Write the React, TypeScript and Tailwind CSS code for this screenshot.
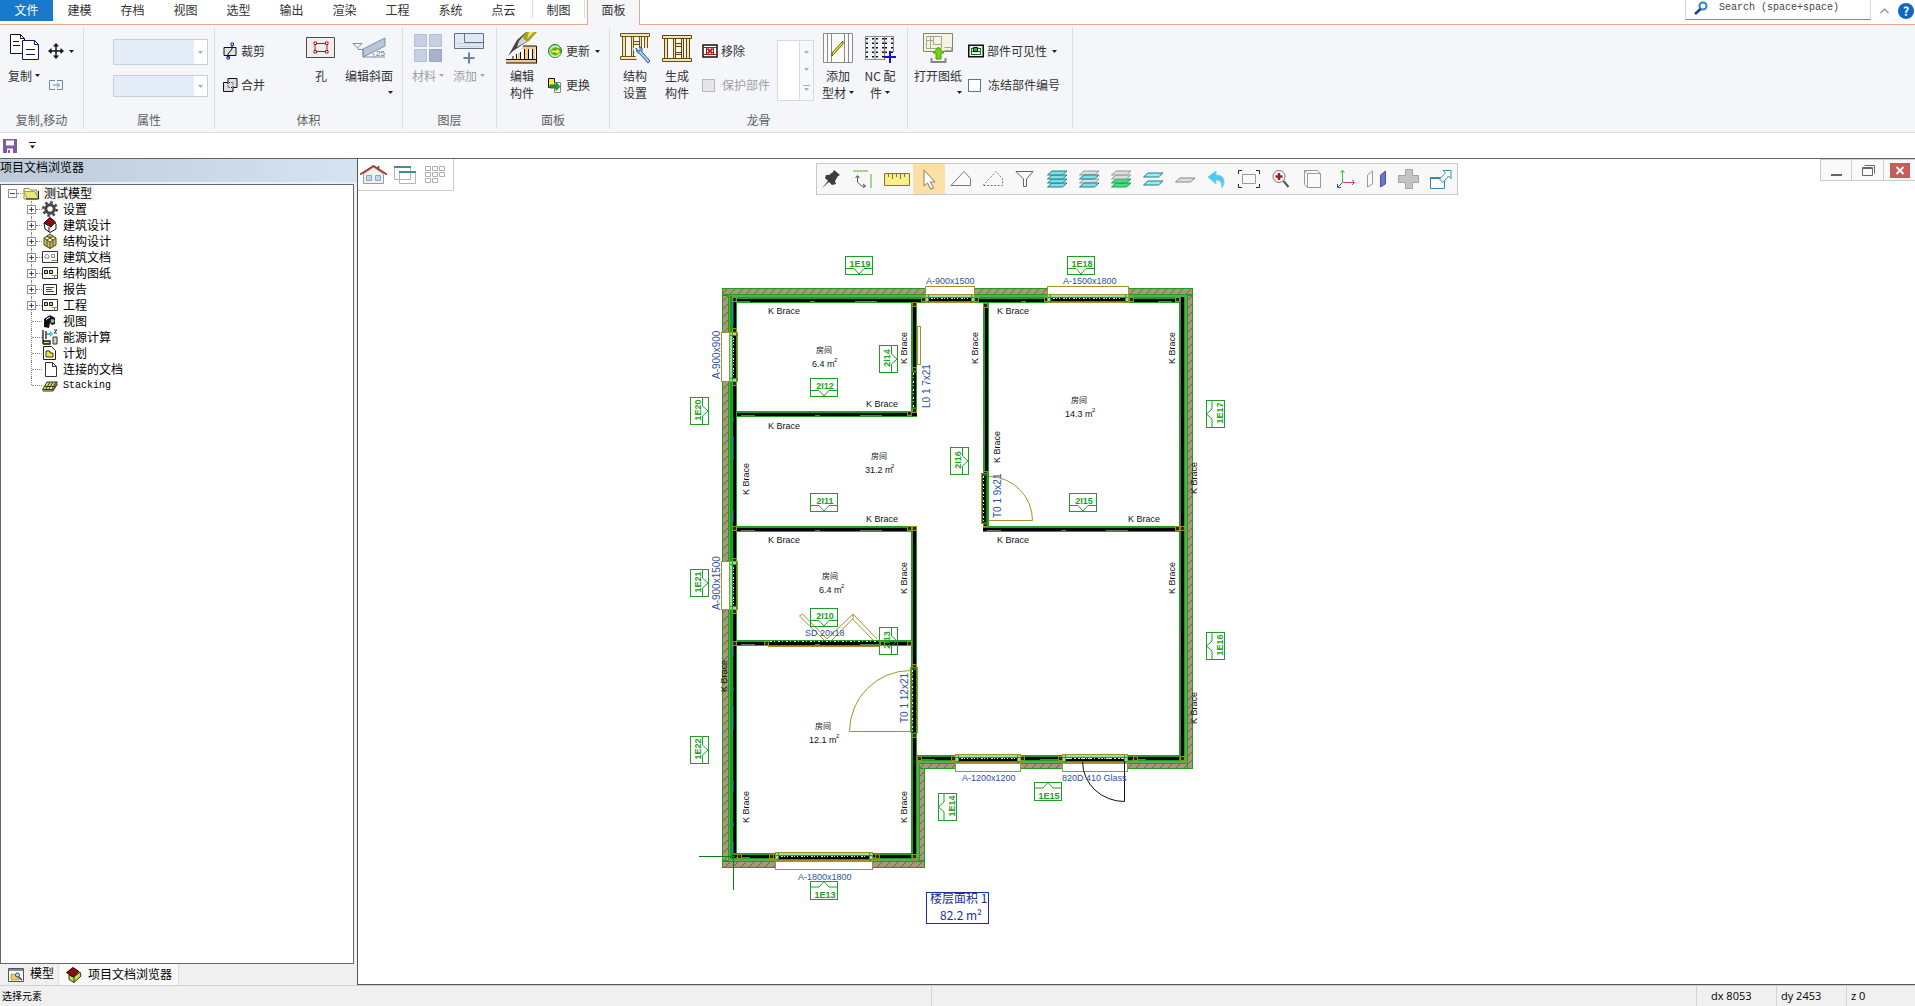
import { ReactNode } from "react";

/* ---------- shared bits ---------- */

function Caret({ dim = false }: { dim?: boolean }) {
  return (
    <svg width="5" height="3" viewBox="0 0 5 3" className="shrink-0" aria-hidden="true">
      <path d="M0 0h5L2.5 3z" fill={dim ? "#a9adb3" : "#222"} />
    </svg>
  );
}

function Group({ title, className, children }: { title: string; className: string; children: ReactNode }) {
  return (
    <section className={`flex h-[102px] shrink-0 flex-col border-r border-[#dcdfe3] ${className}`}>
      <div className="flex h-[84px] items-start">{children}</div>
      <h2 className="text-center leading-[18px] text-[#5c5f66]">{title}</h2>
    </section>
  );
}

function BigButton({ icon, lines, caret, dim, className }: {
  icon: ReactNode; lines: string[]; caret?: "inline" | "below"; dim?: boolean; className: string;
}) {
  return (
    <button type="button" disabled={dim} className={`flex shrink-0 flex-col items-center pt-[5px] ${dim ? "text-[#9ea1a6]" : "text-[#333]"} ${className}`}>
      <span className="mb-[3px] flex h-8 items-center">{icon}</span>
      {lines.map((l, i) => (
        <span key={l} className="flex items-center gap-[3px] whitespace-nowrap leading-[17px]">
          {l}
          {caret === "inline" && i === lines.length - 1 && <Caret dim={dim} />}
        </span>
      ))}
      {caret === "below" && <span className="flex h-[17px] items-center self-end"><Caret /></span>}
    </button>
  );
}

function SmallButton({ icon, label, caret }: { icon: ReactNode; label?: string; caret?: boolean }) {
  return (
    <button type="button" className="flex h-[34px] items-center gap-[3px] whitespace-nowrap text-[#333]">
      {icon}
      {label && <span>{label}</span>}
      {caret && <span className="ml-[2px]"><Caret /></span>}
    </button>
  );
}

function Check({ id, label, disabled }: { id: string; label: string; disabled?: boolean }) {
  return (
    <div className="flex h-[34px] items-center gap-[7px] whitespace-nowrap">
      <input
        id={id}
        type="checkbox"
        disabled={disabled}
        className={`h-[13px] w-[13px] appearance-none border ${disabled ? "border-[#b9b9b9] bg-[#e6e6e6]" : "border-[#5b7499] bg-white"}`}
      />
      <label htmlFor={id} className={disabled ? "text-[#9ea1a6]" : "text-[#333]"}>{label}</label>
    </div>
  );
}

function Combo({ label, className }: { label: string; className: string }) {
  return (
    <div className={`flex w-[95px] border border-[#c6d0da] bg-[#e4edf7] ${className}`}>
      <select aria-label={label} disabled className="w-20 appearance-none bg-[#e4edf7]" />
      <span className="flex flex-1 items-center justify-center bg-white"><Caret dim /></span>
    </div>
  );
}

/* ---------- ribbon icons ---------- */

const CopyIcon = () => (
  <svg width="32" height="32" viewBox="0 0 32 32" fill="#fff">
    <path d="M2.500 2.500h10l4 4V21.500h-14z" stroke="#111" />
    <path d="M12.500 2.500V6.500h4M5 9.500h6M5 13.500h7" stroke="#111" fill="none" />
    <path d="M14.500 8.500h12l4 4V27.500h-16z" stroke="#16166b" />
    <path d="M26.500 8.500V12.500h4M18 17.500h9M18 22.500h9" stroke="#16166b" fill="none" />
  </svg>
);

const MoveIcon = () => (
  <svg width="16" height="16" viewBox="0 0 16 16" fill="#111">
    <path d="M7.300 2h1.400v12H7.300zM2 7.300h12v1.400H2z" />
    <path d="M8 0l3 3.500H5zM8 16l3-3.500H5zM0 8l3.500-3v6zM16 8l-3.500-3v6z" />
  </svg>
);

const MirrorIcon = () => (
  <svg width="16" height="16" viewBox="0 0 16 16" fill="none" stroke="#7484a0">
    <path d="M7 3.500H1.500v9H7M9 3.500h5.500v9H9M5 8h6M9 5.500L11.500 8 9 10.500" />
  </svg>
);

const CutIcon = () => (
  <svg width="16" height="18" viewBox="0 0 16 18" fill="none">
    <path d="M2 5.500h12v8H2z" fill="#e3e3e3" stroke="#111" />
    <path d="M10 3v4L6 12v4" stroke="#111" />
    <path d="M9 1h2.500v2.500H9zM5 14.500h2.500V17H5z" stroke="#1a1acc" />
  </svg>
);

const MergeIcon = () => (
  <svg width="16" height="16" viewBox="0 0 16 16" stroke="#111">
    <path d="M6 1.500h9v9h-4v4H1.500v-9H6z" fill="#ddd" />
    <path d="M6 6v4.500h4.500M11 10V5.500H6.500" fill="none" strokeDasharray="1 1.500" />
  </svg>
);

const HoleIcon = () => (
  <svg width="30" height="32" viewBox="0 0 30 32" fill="none">
    <path d="M.5 5.500h28v20H.5z" fill="#f3eeee" stroke="#4a4a4a" />
    <path d="M9 11.500h12v8H9z" stroke="#444" />
    <path d="M8 10h2.500v2.500H8zM19.500 10H22v2.500h-2.500zM8 18.500h2.500V21H8zM19.500 18.500H22V21h-2.500z" fill="#fff" stroke="#b01818" />
  </svg>
);

const SlopeIcon = () => (
  <svg width="34" height="32" viewBox="0 0 34 32" fill="none" stroke="#7d90a8">
    <path d="M11 17L33 6v8L11 25z" fill="#b9c6d8" />
    <path d="M1 11.500h9L5.500 16zM6 16v1.500h5V25h22M22 25c0-3-1-4-2-5" />
    <text x="24" y="24" fontSize="8" stroke="none" fill="#62758f" fontFamily="Liberation Sans, sans-serif">25</text>
  </svg>
);

const MaterialIcon = () => (
  <svg width="30" height="32" viewBox="0 0 30 32" stroke="#b3bfd4">
    <path d="M1.500 2.500h12v12h-12zM16.500 2.500h12v12h-12zM1.500 17.500h12v12h-12z" fill="#c6d0e2" />
    <path d="M16.500 17.500h12v12h-12z" fill="#a6b3cd" stroke="#97a5c2" />
  </svg>
);

const AddLayerIcon = () => (
  <svg width="32" height="32" viewBox="0 0 32 32" fill="none">
    <path d="M1.500 1.500h29v15h-29z" fill="#dfe8f4" stroke="#5f7290" />
    <path d="M11.500 2v8.500H30" fill="none" stroke="#5f7290" />
    <path d="M4 11.500h24M6 14.500h20" stroke="#c4d2e4" />
    <path d="M16 20.500v11M10.500 26h11" stroke="#6b82a2" strokeWidth="2" />
  </svg>
);

const EditPartIcon = () => (
  <svg width="32" height="32" viewBox="0 0 32 32">
    <path d="M0 28h30v3H0zM17 14h13v3H15zM19 17h3v11h-3zM26 17h3v11h-3zM12 21h3v7h-3z" fill="#f5c98c" />
    <path d="M0 27.500h30M0 31h31M17 14h13.500v17M14.500 20v8M18.500 17v10M22.500 17v10M26.500 17v10M7 24v3M10.500 22v5" stroke="#111" fill="none" />
    <path d="M2 24L11 8 20 0l10 0-8 9L7 19z" fill="#444" />
    <path d="M13 9l6-7 7 1-6 7-9 5z" fill="#d6d6d6" />
    <path d="M20 0h11l-8 9c-3 1-6-2-6-4z" fill="#a8a01c" />
    <path d="M23 0h5l-7 7z" fill="#e8e66c" />
  </svg>
);

const UpdateIcon = () => (
  <svg width="16" height="16" viewBox="0 0 16 16">
    <circle cx="8" cy="8" r="6.500" fill="#52b84e" stroke="#1f7a20" />
    <path d="M12 5a5 5 0 1 0 1 5" fill="none" stroke="#baf0a8" strokeWidth="2" />
    <path d="M4 7h5V5l5 3.500L9 12v-2H4z" fill="#f1ee1f" stroke="#3c7a14" strokeWidth=".6" />
  </svg>
);

const SwapIcon = () => (
  <svg width="16" height="16" viewBox="0 0 16 16">
    <path d="M1.500 1.500h6v9h-6z" fill="#f4ef3c" stroke="#111" />
    <path d="M7.500 5.500h6v10h-6z" fill="#fff" stroke="#888" />
    <path d="M3 8h6V5.500L13 9.500 9 13.500V11H3z" fill="#24a32b" stroke="#063" strokeWidth=".8" />
  </svg>
);

const frame = "M1.500 3.500h29v3h-29zM1.500 26.500h29v3h-29zM3.500 6.500h3v20h-3zM25.500 6.500h3v20h-3zM12.500 6.500h2v20h-2zM20.500 6.500h2v20h-2zM14.500 11.500h6v3h-6zM14.500 20.500h6v2h-6z";

const StructureIcon = () => (
  <svg width="32" height="32" viewBox="0 0 32 32">
    <path d={frame} transform="translate(0 -2)" fill="#f6e3ae" stroke="#6d5516" />
    <path d="M14 16h18v16H19z" fill="#f4f6f9" />
    <path d="M17 16l1 4 3 2 8 9 2-2-8-9V16l-2-1v4h-2z" fill="#a9cdf2" stroke="#2b5c96" />
  </svg>
);

const GenerateIcon = () => (
  <svg width="32" height="32" viewBox="0 0 32 32"><path d={frame} fill="#f6e3ae" stroke="#5d4810" /></svg>
);

const RemoveIcon = () => (
  <svg width="16" height="14" viewBox="0 0 16 14">
    <path d="M1 1h14v12H1z" fill="#fff" stroke="#111" strokeWidth="1.500" />
    <path d="M1 3.500h14M1 10.500h14M4.500 3v8M11.500 3v8" stroke="#8f2020" />
    <path d="M5.500 4.500l5 5M10.500 4.500l-5 5" stroke="#d01616" strokeWidth="1.800" />
  </svg>
);

const ProfileIcon = () => (
  <svg width="30" height="32" viewBox="0 0 30 32" fill="none" stroke="#8b8b8b">
    <path d="M.5 1.500h29v29H.5zM4.500 2v28M8.500 2v28M21.500 2v28M25.500 2v28" fill="#fafafa" />
    <path d="M9 21L20 9v3L9 24z" fill="#f3ef2a" stroke="#5a5600" />
  </svg>
);

const NcIcon = () => (
  <svg width="32" height="32" viewBox="0 0 32 32" fill="none">
    <path d="M1 4.500h29M1 27.500h20M1.500 4v24M29.500 4v16" stroke="#8b8b8b" />
    <path d="M3 6v21M9 6v21M13 6v21M19 6v21M22 6v18M28 6v15" stroke="#111" strokeWidth="2" strokeDasharray="1.500 3" />
    <path d="M11 5v22M20.500 5v22" stroke="#777" />
    <path d="M26 19v12M20 25h12" stroke="#1313d0" strokeWidth="2" />
  </svg>
);

const OpenDrawingIcon = () => (
  <svg width="32" height="32" viewBox="0 0 32 32" fill="none">
    <path d="M1.500 1.500h29v18h-29z" fill="#f5f4e2" stroke="#85856e" />
    <path d="M4.500 4.500h15v12h-15zM4.500 8.500h7M8.500 4.500v12M11.500 4.500v8h8M22.500 15.500h7v3h-7" stroke="#a6a690" />
    <path d="M16.500 15l5.500 6h-3v6h-5v-6h-3z" fill="#6fd30f" stroke="#4b9a08" />
    <path d="M9.500 26v4h14v-4" stroke="#888" strokeWidth="2" />
  </svg>
);

const VisibleIcon = () => (
  <svg width="16" height="14" viewBox="0 0 16 14">
    <path d="M.75 1.250h14.500v11.500H.75z" fill="#e4f7e0" stroke="#111" strokeWidth="1.500" />
    <path d="M3 4.500h10M3 7.500h10M3 10.500h10M3.500 4v7M12.500 4v7" stroke="#1d6f28" />
    <path d="M5.500 3.500h4v4h-4z" stroke="#111" fill="#3da64a" />
  </svg>
);

/* ---------- top of window ---------- */

const tabs = ["建模", "存档", "视图", "选型", "输出", "渲染", "工程", "系统", "点云"];

function TabBar() {
  return (
    <nav className="flex h-[25px] shrink-0 bg-white text-[#333]">
      <div className="border-b border-[#e9a885]">
        <button type="button" className="h-[21px] w-[53px] bg-[#1979ca] pb-[2px] leading-[19px] text-white">文件</button>
      </div>
      {tabs.map((t) => (
        <button key={t} type="button" className="w-[53px] border-b border-[#e9a885] pb-1">{t}</button>
      ))}
      <div className="flex w-[57px] border-b border-[#e9a885] pl-[2px]">
        <button type="button" className="mb-[6px] w-[53px] border-x border-[#dcdcdc] pt-px">制图</button>
      </div>
      <button type="button" className="w-[53px] border-x border-[#e9a885] bg-[#f4f6f9] pb-[5px]">面板</button>
      <div className="flex flex-1 items-start justify-end border-b border-[#e9a885]">
        <label className="flex h-[20px] w-[186px] items-center border-x border-b border-[#d8d8d8] border-b-[#888] pl-2">
          <svg width="14" height="14" viewBox="0 0 14 14" fill="none" className="mb-[3px]">
            <circle cx="9" cy="5" r="3.500" stroke="#2f7fc4" strokeWidth="2" />
            <path d="M6.500 8L1 13" stroke="#1c3f94" strokeWidth="2.500" />
          </svg>
          <input
            aria-label="Search"
            placeholder="Search (space+space)"
            className="mb-1 ml-[11px] w-36 bg-transparent font-['Liberation_Mono',monospace] text-[10px] leading-3 placeholder:text-[#444] placeholder:opacity-100"
          />
        </label>
        <svg width="9" height="20" viewBox="0 0 9 20" className="ml-[9px]"><path d="M.5 13l4-4 4 4" fill="none" stroke="#999" strokeWidth="1.500" /></svg>
        <button type="button" aria-label="Help" className="ml-[9px] mt-[3px] mr-px h-4 w-4 rounded-full bg-[#1168c4] text-center text-[12px] font-bold leading-4 text-white">?</button>
      </div>
    </nav>
  );
}

function Ribbon() {
  return (
    <div className="flex h-[108px] shrink-0 overflow-hidden border-b border-[#d9dbde] bg-[#f4f6f9] pt-[2px]">
      <Group title="复制,移动" className="w-[84px]">
        <BigButton icon={<CopyIcon />} lines={["复制"]} caret="inline" className="ml-[7px] w-[34px]" />
        <div className="ml-[7px] pt-[7px]">
          <SmallButton icon={<MoveIcon />} caret />
          <SmallButton icon={<MirrorIcon />} />
        </div>
      </Group>
      <Group title="属性" className="w-[131px]">
        <div className="flex flex-col gap-[10px] pl-[29px] pt-3">
          <Combo label="属性一" className="h-[26px]" />
          <Combo label="属性二" className="h-[22px]" />
        </div>
      </Group>
      <Group title="体积" className="w-[188px]">
        <div className="ml-[7px] w-[81px] pt-[7px]">
          <SmallButton icon={<CutIcon />} label="裁剪" />
          <SmallButton icon={<MergeIcon />} label="合并" />
        </div>
        <BigButton icon={<HoleIcon />} lines={["孔"]} className="w-9" />
        <BigButton icon={<SlopeIcon />} lines={["编辑斜面"]} caret="below" className="ml-[6px] w-[48px]" />
      </Group>
      <Group title="图层" className="w-[94px]">
        <BigButton icon={<MaterialIcon />} lines={["材料"]} caret="inline" dim className="ml-[7px] w-[36px]" />
        <BigButton icon={<AddLayerIcon />} lines={["添加"]} caret="inline" dim className="ml-[5px] w-[36px]" />
      </Group>
      <Group title="面板" className="w-[113px]">
        <BigButton icon={<EditPartIcon />} lines={["编辑", "构件"]} className="ml-2 w-[34px]" />
        <div className="ml-2 pt-[7px]">
          <SmallButton icon={<UpdateIcon />} label="更新" caret />
          <SmallButton icon={<SwapIcon />} label="更换" />
        </div>
      </Group>
      <Group title="龙骨" className="w-[298px]">
        <BigButton icon={<StructureIcon />} lines={["结构", "设置"]} className="ml-[9px] w-8" />
        <BigButton icon={<GenerateIcon />} lines={["生成", "构件"]} className="ml-[10px] w-8" />
        <div className="ml-[9px] w-[68px] pt-[7px]">
          <SmallButton icon={<RemoveIcon />} label="移除" />
          <Check id="protect" label="保护部件" disabled />
        </div>
        <div className="ml-[7px] mt-[13px] flex h-[61px] w-[37px] border border-[#d7dade] bg-white">
          <div className="ml-auto flex w-[14px] flex-col items-center justify-between border-l border-[#d7dade] bg-[#f7f8fa] py-[9px]">
            <svg width="5" height="3" viewBox="0 0 5 3"><path d="M0 3h5L2.500 0z" fill="#a9adb3" /></svg>
            <Caret dim />
            <svg width="7" height="6" viewBox="0 0 7 6"><path d="M0 0h7v1H0zM1 3h5L3.500 6z" fill="#a9adb3" /></svg>
          </div>
        </div>
        <BigButton icon={<ProfileIcon />} lines={["添加", "型材"]} caret="inline" className="ml-[6px] w-[36px]" />
        <BigButton icon={<NcIcon />} lines={["NC 配", "件"]} caret="inline" className="ml-[6px] w-[36px]" />
      </Group>
      <Group title="" className="w-[165px]">
        <BigButton icon={<OpenDrawingIcon />} lines={["打开图纸"]} caret="below" className="ml-[6px] w-[48px]" />
        <div className="ml-[6px] pt-[7px]">
          <SmallButton icon={<VisibleIcon />} label="部件可见性" caret />
          <Check id="freeze" label="冻结部件编号" />
        </div>
      </Group>
    </div>
  );
}

function QuickAccess() {
  return (
    <div className="flex h-[26px] shrink-0 items-center gap-3 border-b border-[#666] bg-white pl-[3px]">
      <button type="button" aria-label="保存">
        <svg width="14" height="14" viewBox="0 0 14 14">
          <path d="M0 0h14v14H0z" fill="#8557a5" />
          <path d="M3 1.500h8v5H3zM4 9.500h6V14H4z" fill="#fff" />
          <path d="M5 11h2v3H5z" fill="#8557a5" />
        </svg>
      </button>
      <button type="button" aria-label="自定义">
        <svg width="7" height="7" viewBox="0 0 7 7"><path d="M0 0h7v1H0zM1 3.500h5L3.500 6.500z" fill="#111" /></svg>
      </button>
    </div>
  );
}

/* ---------- project tree ---------- */

const treeIcons: Record<string, ReactNode> = {
  folder: (
    <>
      <path d="M1 3.500h5l1.500 1.500H14v9H1z" fill="#fffbd0" stroke="#8a8a50" />
      <path d="M1 6.500h11l3 7H4z" fill="#ece77a" stroke="#a8a444" />
      <path d="M3 14h12.500V6" fill="none" stroke="#222" />
    </>
  ),
  gear: (
    <>
      <circle cx="8" cy="8" r="4.200" fill="none" stroke="#444" strokeWidth="3" />
      <circle cx="8" cy="8" r="6.700" fill="none" stroke="#444" strokeWidth="2.500" strokeDasharray="2.600 2.660" />
    </>
  ),
  arch: (
    <>
      <path d="M2 6L8 1l6 6v5l-6 3.500L3 12z" fill="#fff" stroke="#111" />
      <path d="M2 6L8 .5 13.500 5 9 10z" fill="#8b0d0d" stroke="#300" />
      <path d="M7 10v5" stroke="#111" />
    </>
  ),
  struct: (
    <path d="M2 5l6-4 6 4v7l-6 3.500L2 12zM2 5l6 4 6-4M8 9v6.500M5 7v6.500M11 7v6.500M5 3l6 4M11 3L5 7" fill="#c9c463" stroke="#4a4a14" />
  ),
  archDoc: (
    <>
      <path d="M.5 2.500h15v11H.5z" fill="#fff" stroke="#333" />
      <path d="M3 7l2-2 2 2v2H3zM9.500 5.500h3v3h-3zM9.500 11.500H15" fill="none" stroke="#888" />
    </>
  ),
  sheet: (
    <>
      <path d="M.5 2.500h15v11H.5z" fill="#fff" stroke="#333" />
      <path d="M2.500 5.500h3v3h-3zM7.500 5.500h3v3h-3z" fill="#e6e05a" stroke="#111" />
      <path d="M9.500 10.500h6M12.500 10.500v3" stroke="#888" />
    </>
  ),
  report: (
    <>
      <path d="M1.500 3.500h13v10h-13z" fill="#fff" stroke="#222" />
      <path d="M4 6.500h8M4 8.500h6M4 10.500h8" stroke="#444" />
    </>
  ),
  camera: (
    <>
      <path d="M2 6l6-4 5 3v6l-3 1-2-2-1 5-5-1z" fill="#111" />
      <circle cx="10.500" cy="8" r="2" fill="#9aa" />
      <path d="M4 6.500l4-2.500" stroke="#fff" />
    </>
  ),
  energy: (
    <>
      <path d="M1 1v14M4 2v8M1 12h7v3H1" fill="#ece63c" stroke="#111" strokeWidth="1.300" />
      <path d="M5 4h3V2l3 3-3 3V6H5z" fill="#3fc4d0" />
      <path d="M11 8h4v7h-4z" fill="#bfe0bf" stroke="#333" />
      <path d="M12 1h3l-3 3h3" fill="none" stroke="#333" />
    </>
  ),
  plan: (
    <>
      <path d="M1.500 1.500h8l4 4v9h-12z" fill="#fff" stroke="#222" />
      <path d="M4 6h4v2h3v4H4z" fill="#f2ec2a" stroke="#333" />
    </>
  ),
  file: <path d="M3.500 1.500h7l4 4v10h-11zM10.500 1.500v4h4" fill="#fff" stroke="#333" />,
  stack: <path d="M.5 12.500L5 5h10.500L11 12.500zM3 9.500h10M7 12l4-7M4 12l4-7M10 12l4-7M.5 14h10.500L15.500 7" fill="#d9d277" stroke="#3b3b10" />,
};

function TreeIcon({ name }: { name: string }) {
  return <svg width="16" height="16" viewBox="0 0 16 16" className="shrink-0">{treeIcons[name]}</svg>;
}

function Expander({ open }: { open?: boolean }) {
  return (
    <button type="button" aria-label={open ? "折叠" : "展开"} className="shrink-0">
      <svg width="9" height="9" viewBox="0 0 9 9" shapeRendering="crispEdges">
        <path d="M.5.500h8v8h-8z" fill="#fff" stroke="#919191" />
        <path d={open ? "M2 4h5v1H2z" : "M2 4h5v1H2zM4 2h1v5H4z"} fill="#2b4a8c" />
      </svg>
    </button>
  );
}

const tree: [string, string, boolean][] = [
  ["设置", "gear", true],
  ["建筑设计", "arch", true],
  ["结构设计", "struct", true],
  ["建筑文档", "archDoc", true],
  ["结构图纸", "sheet", true],
  ["报告", "report", true],
  ["工程", "sheet", true],
  ["视图", "camera", false],
  ["能源计算", "energy", false],
  ["计划", "plan", false],
  ["连接的文档", "file", false],
  ["Stacking", "stack", false],
];

function Sidebar() {
  return (
    <aside className="flex w-[357px] shrink-0 flex-col bg-[#f0f0f0] text-black">
      <h1 className="h-[23px] bg-linear-to-r from-[#bccad9] to-[#d6e4f2] leading-[15px]">项目文档浏览器</h1>
      <div className="mr-[3px] mt-[2px] flex-1 overflow-hidden border border-[#666] bg-white">
        <div className="flex h-4 items-center pl-[7px]">
          <Expander open />
          <span className="w-[6px] border-t border-dotted border-[#888]" />
          <TreeIcon name="folder" />
          <span className="ml-[3px] bg-[#f2f2f2] px-[2px] leading-4">测试模型</span>
        </div>
        <ul>
          {tree.map(([label, icon, expandable], i) => (
            <li key={label} className="flex h-4 items-center pl-[26px]">
              {expandable ? (
                <span className="flex h-4 flex-col items-center">
                  <span className="h-1 border-l border-dotted border-[#888]" />
                  <Expander />
                  <span className="h-[3px] border-l border-dotted border-[#888]" />
                </span>
              ) : (
                <span className={`ml-1 w-[5px] self-start border-l border-dotted border-[#888] ${i === tree.length - 1 ? "h-2" : "h-4"}`} />
              )}
              <span className={`border-t border-dotted border-[#888] ${expandable ? "w-[6px]" : "-ml-1 w-[10px]"}`} />
              <TreeIcon name={icon} />
              <span className={`ml-[5px] ${label === "Stacking" ? "font-['Liberation_Mono',monospace] text-[10px] leading-3 pt-[2px]" : "leading-4"}`}>{label}</span>
            </li>
          ))}
        </ul>
      </div>
      <div className="flex h-[21px] pl-[2px]">
        <button type="button" className="flex w-[57px] items-center gap-[6px] border-r border-[#e2e2e2] pl-[6px]">
          <svg width="16" height="14" viewBox="0 0 16 14">
            <path d="M.5.500h15v13H.5z" fill="#fff" stroke="#555" />
            <path d="M1 1h14v2H1z" fill="#7a8ca8" />
            <path d="M3 6h4l1 1h3v5H3z" fill="#f0c860" stroke="#a07820" strokeWidth=".6" />
            <circle cx="9.500" cy="7" r="2" fill="#cfe4ff" stroke="#345" />
            <path d="M11 9l3 3" stroke="#345" strokeWidth="1.500" />
          </svg>
          <span className="pb-[4px]">模型</span>
        </button>
        <button type="button" className="flex w-[120px] items-center gap-[6px] border-r border-[#ddd] bg-[#f9f9f9] pl-[7px]">
          <svg width="16" height="16" viewBox="0 0 16 16">
            <path d="M3 8l5 2 6-5 1 4-7 6.500-5-3z" fill="#bfe33a" stroke="#232" />
            <path d="M.5 5.500L7 .5l6 4L7 10z" fill="#8b0d0d" stroke="#300" />
            <path d="M8 10v5" stroke="#232" />
          </svg>
          <span className="pb-[2px]">项目文档浏览器</span>
        </button>
      </div>
    </aside>
  );
}

/* ---------- view toolbars ---------- */

const sheetPath = (y: number) => `M.500 ${y + 4}L5 ${y}h15l-4.500 ${4}z`;

const tools: [string, ReactNode][] = [
  ["固定", <path d="M11 1l6 5-2 1-3 5 1 3-4 1-3-3-7 6 6-7-3-3 1-3 3 0 4-3z" fill="#3d3d3d" />],
  ["旋转", <><path d="M-2 1h15v2H-2zM15 5h2v14h-2z" fill="#a6d68c" /><path d="M2.500 7v6l4 4h4M.5 9l2-2.500 2 2.500M8 15l2.500 2-2.500 2" stroke="#555" fill="none" /></>],
  ["测量", <><path d="M-2.500 4.500h25v12h-25z" fill="#f7f08a" stroke="#8f7420" /><path d="M1.500 5v3M5.500 5v5M9.500 5v3M13.500 5v5M17.500 5v3" stroke="#8f7420" /></>],
  ["选择", <path d="M5 1v16l3.500-3 3 6 3-1-3-6h4.500z" fill="#fff" stroke="#8a7a66" />],
  ["多边形", <path d="M0 16.500L13 2.500l6.500 7v7z" fill="#fafafa" stroke="#777" />],
  ["虚线多边形", <path d="M0 16.500L13 2.500l6.500 7v7z" fill="none" stroke="#777" strokeDasharray="2 1.500" />],
  ["过滤", <path d="M1 2.500h17L11.500 10v7.500h-3V10z" fill="#fff" stroke="#666" />],
  ["全部层", <g stroke="#1f7f8a" fill="#7fdfe8"><path d={sheetPath(14)} /><path d={sheetPath(10)} /><path d={sheetPath(6)} /><path d={sheetPath(2)} /></g>],
  ["部分层", <><g stroke="#999" fill="#ddd"><path d={sheetPath(10)} /><path d={sheetPath(2)} /></g><g stroke="#1f7f8a" fill="#7fdfe8"><path d={sheetPath(14)} /><path d={sheetPath(6)} /></g></>],
  ["当前层", <><g stroke="#1fa04a" fill="#3fe07a"><path d={sheetPath(14)} /><path d={sheetPath(10)} /></g><g stroke="#999" fill="#ddd"><path d={sheetPath(6)} /><path d={sheetPath(2)} /></g></>],
  ["双层", <g stroke="#1f7f8a" fill="#9fe8ee"><path d={sheetPath(12)} /><path d={sheetPath(4)} /></g>],
  ["单层", <path d={sheetPath(9)} fill="#ddd" stroke="#888" />],
  ["撤销", <path d="M1 8l8-6v4c8 0 10 6 6 13 0-6-2-8-6-8v4z" fill="#45cdee" stroke="#8cc9e6" />],
  ["适合窗口", <><path d="M3.500 5.500h13v9h-13z" fill="#fafafa" stroke="#999" /><path d="M-.5 5V1.500H3M17 1.500h3.500V5M-.5 15v3.500H3M17 18.500h3.500V15" fill="none" stroke="#222" /></>],
  ["放大", <><circle cx="8" cy="7.500" r="6" fill="#fdf4f4" stroke="#777" /><path d="M8 4v7M4.500 7.500h7" stroke="#a01c1c" strokeWidth="2.500" /><path d="M12.500 12l5 6" stroke="#555" strokeWidth="2" /></>],
  ["三维", <path d="M1.500 1.500h13l3 3v14h-13l-3-3zM4.500 18V4.500h13M1.500 1.500l3 3" fill="#fafafa" stroke="#999" />],
  ["坐标轴", <g fill="none"><path d="M7.500 13V2M5.500 4l2-3 2 3" stroke="#3ecb4c" /><path d="M7.500 13.500h12M17 11l2.500 2.500L17 16" stroke="#d8415a" /><path d="M7.500 13.500l-5 5M2.500 15v3.500H6" stroke="#3c50b4" /></g>],
  ["剖面", <><path d="M.5 6l5-4v13l-5 3z" fill="#fafafa" stroke="#999" /><path d="M13.500 6l5-4v13l-5 3z" fill="#6a74d6" stroke="#4a53a8" /></>],
  ["添加", <path d="M6.500.500h7v6h6v7h-6v6h-7v-6h-7v-7h7z" fill="#c4c4c4" stroke="#a4a4a4" />],
  ["外部窗口", <><path d="M-.5 8.500h14v11h-14z" fill="#fff" stroke="#3b85ab" /><path d="M-.5 8h14v2h-14z" fill="#3b85ab" /><path d="M12 1.500h8v8l-2.500-2.500L12 13.500l-3.500-3.500L14.500 4z" fill="#fff" stroke="#3b85ab" /></>],
];

function ViewToolbar() {
  return (
    <div className="absolute inset-x-0 top-1 flex justify-center">
      <div className="flex h-8 border border-[#c8c8c8] bg-[#f8f8f8]">
        {tools.map(([label, icon]) => (
          <button key={label} type="button" aria-label={label} className={`flex w-8 items-center justify-center ${label === "选择" ? "bg-[#fde0a6]" : ""}`}>
            <svg width="20" height="20" viewBox="0 0 20 20" className="overflow-visible">{icon}</svg>
          </button>
        ))}
      </div>
    </div>
  );
}

function ViewCorner() {
  return (
    <div className="absolute left-0 top-0 flex h-8 w-24 items-center gap-[7px] border-b border-r border-[#ccc] bg-white pl-[2px]">
      <svg width="27" height="20" viewBox="0 0 27 20">
        <path d="M3.500 9v9.500h20V9L13.500 2z" fill="#f5f2ea" stroke="#9a9a9a" />
        <path d="M0 9.500L13.500 1 27 9.500M18.500 1v3" fill="none" stroke="#a0382a" strokeWidth="1.800" />
        <path d="M6.500 10.500h5v5h-5zM15.500 10.500h5v5h-5z" fill="#bcd7f2" stroke="#8aa4c4" />
      </svg>
      <svg width="22" height="20" viewBox="0 0 22 20" fill="#fff" stroke="#b5b5b5">
        <path d="M.5 1.500h16v13H.5zM5.500 6.500h16v12h-16z" />
        <path d="M0 2h17M5 7h17" stroke="#3f8f93" strokeWidth="2" />
      </svg>
      <svg width="22" height="20" viewBox="0 0 22 20" fill="#fff" stroke="#b0b0b0" className="ml-[2px]">
        <path d="M.5 1.500h5v4h-5zM7.500 1.500h5v4h-5zM14.500 1.500h5v4h-5zM.5 7.500h5v4h-5zM7.500 7.500h5v4h-5zM14.500 7.500h5v4h-5zM.5 13.500h5v4h-5zM7.500 13.500h5v4h-5z" />
      </svg>
    </div>
  );
}

function WindowButtons() {
  return (
    <div className="absolute right-0 top-0 flex h-[22px] border border-r-0 border-[#ccc] bg-[#fafafa]">
      <button type="button" aria-label="最小化" className="w-[31px] border-r border-[#ccc]">
        <svg width="31" height="19" viewBox="0 0 31 19"><path d="M10 13h11v2H10z" fill="#666" /></svg>
      </button>
      <button type="button" aria-label="还原" className="w-[32px] border-r border-[#ccc]">
        <svg width="31" height="19" viewBox="0 0 31 19" fill="none" stroke="#666"><path d="M10.500 6.500h10v8h-10zM10 7.500h11M12.500 4.500h10v8" /></svg>
      </button>
      <button type="button" aria-label="关闭" className="flex w-[31px] items-center justify-center">
        <svg width="20" height="15" viewBox="0 0 20 15"><path d="M0 0h20v15H0z" fill="#c75c5c" /><path d="M6.500 4l7 7M13.500 4l-7 7" stroke="#fff" strokeWidth="1.800" /></svg>
      </button>
    </div>
  );
}

/* ---------- floor plan ---------- */

const GREEN = "#1f9e24";
const OLIVE = "#a8912c";
const BLUE = "#2c539c";

type Box = [number, number, number, number]; // x, y, w, h

const hatched: Box[] = [
  [722, 288, 471, 7],
  [722, 295, 7, 566],
  [722, 861, 203, 7],
  [919, 763, 6, 98],
  [919, 763, 274, 6],
  [1187, 295, 6, 474],
];

const insulation: Box[] = [
  [729, 295, 458, 2],
  [729, 295, 3, 566],
  [729, 859, 190, 2],
  [917, 761, 2, 100],
  [917, 761, 270, 2],
  [1184, 297, 3, 466],
];

// stud walls, all 6 px thick
const studs: Box[] = [
  [732, 297, 453, 6],
  [731, 297, 6, 562],
  [732, 853, 185, 6],
  [911, 303, 6, 113],
  [737, 411, 180, 6],
  [737, 526, 180, 6],
  [911, 526, 6, 333],
  [737, 640, 175, 6],
  [983, 303, 6, 229],
  [983, 526, 199, 6],
  [917, 755, 266, 6],
  [1179, 297, 6, 464],
];

const nodes: [number, number][] = [
  [734, 299], [923, 299], [976, 299], [1046, 299], [1131, 299], [1177, 299],
  [914, 304], [985, 305], [734, 330], [734, 383], [914, 369], [914, 410],
  [909, 413], [734, 528], [909, 528], [914, 528], [734, 560], [734, 611],
  [985, 473], [985, 524], [1177, 528], [1182, 528], [734, 643], [766, 643],
  [882, 643], [909, 643], [914, 666], [914, 735], [919, 758], [953, 758],
  [1022, 758], [1060, 758], [1135, 758], [1182, 758], [739, 856], [771, 856],
  [877, 856], [914, 856],
];

// [x, y, length, side the sill is on]
const windows: [number, number, number, "top" | "left" | "bottom"][] = [
  [925, 286, 50, "top"],
  [1047, 286, 82, "top"],
  [721, 332, 50, "left"],
  [721, 561, 49, "left"],
  [775, 851, 98, "bottom"],
  [955, 753, 66, "bottom"],
  [1062, 753, 66, "bottom"],
];

const braces: [number, number][] = [
  [768, 314], [997, 314], [866, 407], [768, 429], [866, 522], [1128, 522], [768, 543], [997, 543],
];

const bracesUp: [number, number][] = [
  [907, 364], [978, 364], [1175, 364], [1000, 463], [1197, 494], [749, 495],
  [907, 594], [1175, 594], [727, 692], [1197, 724], [749, 823], [907, 823],
];

const sizes: [string, number, number][] = [
  ["A-900x1500", 926, 284], ["A-1500x1800", 1063, 284], ["SD 20x18", 805, 636],
  ["A-1800x1800", 798, 880], ["A-1200x1200", 962, 781], ["820D 410 Glass", 1062, 781],
];

const sizesUp: [string, number, number][] = [
  ["A-900x900", 720, 379], ["A-900x1500", 720, 610], ["L0 1 7x21", 930, 408],
  ["T0 1 9x21", 1001, 518], ["T0 1 12x21", 908, 723],
];

const tags: [string, number, number, "down" | "up" | "right" | "left"][] = [
  ["1E19", 845, 256, "down"], ["1E18", 1067, 256, "down"], ["2I12", 810, 378, "down"],
  ["2I11", 810, 493, "down"], ["2I15", 1069, 493, "down"], ["2I10", 810, 608, "down"],
  ["1E13", 810, 881, "up"], ["1E15", 1034, 782, "up"],
  ["1E20", 690, 397, "right"], ["1E21", 690, 569, "right"], ["1E22", 690, 736, "right"],
  ["2I14", 879, 345, "right"], ["2I16", 950, 447, "right"], ["2I13", 879, 627, "right"],
  ["1E17", 1206, 400, "left"], ["1E16", 1206, 632, "left"], ["1E14", 938, 793, "left"],
];

// [area, x, baseline, x of the name, x of the exponent]
const rooms: [string, number, number, number, number][] = [
  ["6.4 m", 812, 367, 816, 834],
  ["31.2 m", 865, 473, 871, 891],
  ["14.3 m", 1065, 417, 1071, 1092],
  ["6.4 m", 819, 593, 822, 841],
  ["12.1 m", 809, 743, 815, 836],
];

function Stud({ box: [x, y, w, h] }: { box: Box }) {
  const across = w > h;
  const outer = across ? "M0 3" : "M3 0";
  const run = across ? `h${w}` : `v${h}`;
  const blue = x === 731 && !across;
  return (
    <g transform={`translate(${x} ${y})`} fill="none">
      <path d={outer + run} stroke={GREEN} strokeWidth="6" />
      <path d={across ? `M0 3.500h${w}` : `M3.500 0v${h}`} stroke="#000" strokeWidth="3" />
      <path d={across ? `M4 4.500h${w - 8}` : `M1.500 4v${h - 8}`} stroke="#5e7a60" strokeDasharray="14 60 5 40 22 70" />
      {blue && <path d={`M2.500 4v${h - 8}`} stroke="#1c2ec0" strokeDasharray="24 50 12 30 5 14" />}
    </g>
  );
}

function WindowMark({ x, y, len, side }: { x: number; y: number; len: number; side: string }) {
  const up = side === "left";
  const sill = side === "bottom" ? 10 : 0;
  const base = side === "bottom" ? 2 : 9;
  return (
    <g transform={up ? `translate(${x} ${y}) matrix(0 1 1 0 0 0)` : `translate(${x} ${y})`}>
      <rect x="0" y={sill} width={len} height="8" fill="#fff" />
      <rect x="0" y={base} width={len} height="8" fill="#8fe6a4" />
      <path d={`M0 ${base + 2.5}h${len}M0 ${base + 6.5}h${len}`} stroke={GREEN} />
      <path d={`M4 ${base + 4.5}h${len - 8}`} stroke="#000" strokeWidth="3" />
      <path d={`M6 ${base + 3.5}h${len - 12}`} stroke="#d8e8d8" strokeDasharray="2 1 1 2 1 3" />
      <rect x=".5" y={sill + 0.5} width={len - 1} height="8" fill="none" stroke={OLIVE} />
      <rect x=".5" y={base - 0.5} width={len - 1} height="8" fill="none" stroke={OLIVE} />
      <path d={`M3.500 ${base}v8M${len - 3.5} ${base}v8`} stroke={GREEN} />
    </g>
  );
}

function Tag({ label, x, y, dir }: { label: string; x: number; y: number; dir: string }) {
  const rule = "M0 12.500h9l5 5.500 5-5.500h9";
  const ruleUp = "M0 6h9l5-5.500 5 5.500h9";
  const flat = dir === "down" || dir === "up";
  return (
    <g transform={flat ? `translate(${x} ${y})` : `translate(${x} ${y + 28}) rotate(-90)`} fill={GREEN}>
      <rect x=".5" y=".5" width="27" height="18" fill="none" stroke={GREEN} />
      <path d={dir === "down" || dir === "right" ? rule : ruleUp} fill="none" stroke={GREEN} />
      <text x="15" y={dir === "down" || dir === "right" ? 11 : 17} textAnchor="middle" fontSize="9" fontWeight="bold">{label}</text>
    </g>
  );
}

function FloorPlan() {
  return (
    <svg className="h-full w-full" fontFamily="Liberation Sans, Noto Sans CJK SC, sans-serif" fontSize="9">
      <defs>
        <pattern id="hatch" width="8" height="8" patternUnits="userSpaceOnUse">
          <path d="M0 0h8v8H0z" fill="#a29a80" />
          <path d="M0 8L8 0" stroke="#ac4c22" />
        </pattern>
      </defs>
      <g transform="translate(-358 -159)">
        <g shapeRendering="crispEdges">
          {hatched.map(([x, y, w, h]) => (
            <rect key={`${x}-${y}-${w}`} x={x + 0.5} y={y + 0.5} width={w - 1} height={h - 1} fill="url(#hatch)" stroke={GREEN} />
          ))}
          {insulation.map(([x, y, w, h]) => (
            <rect key={`${x}-${y}-${w}`} x={x} y={y} width={w} height={h} fill="#5cab52" />
          ))}
          {studs.map((b) => <Stud key={b.join()} box={b} />)}
          <path d="M731 296v563" stroke="#08a80c" strokeWidth="2" />
          {nodes.map(([x, y]) => (
            <rect key={`${x}-${y}`} x={x - 1.5} y={y - 1.5} width="4" height="4" fill="#2a2a08" stroke="#93901c" />
          ))}
          {windows.map(([x, y, len, side]) => <WindowMark key={`${x}-${y}`} x={x} y={y} len={len} side={side} />)}

          {/* door openings */}
          <g fill="#0a6b14" stroke={GREEN}>
            <rect x="911.500" y="371.500" width="5" height="37" />
            <rect x="981.500" y="473.500" width="6" height="50" />
            <rect x="911.500" y="667.500" width="5" height="66" />
          </g>
          <path d="M914 373v34M984 476v46M914 670v62M770 642.500h108" stroke="#000" strokeWidth="3" fill="none" />
          <path d="M913.500 373v34M983.500 476v46M912.500 670v62M770 641.500h108M1066 758.500h58" stroke="#e4f0e4" strokeDasharray="2 2 1 3" fill="none" />
          <path d="M768 646.500h112M910.500 667v66M917.500 667v66M981 474v50" stroke={OLIVE} fill="none" />
          <rect x="917.500" y="326.500" width="3" height="38" fill="#fff" stroke={OLIVE} />
          <path d="M699 856.500h36M733.500 856v34" stroke="#0b7a14" />
        </g>

        <g fill="none" stroke={OLIVE}>
          <path d="M989 476.500A44 44 0 0 1 1032.500 520.500H989" />
          <path d="M911 670.500A61 61 0 0 0 849.500 731.500H911" />
          <path d="M799.500 616l3-2L827 639l26-25 24 25M799.500 616L824 640M832 640l20.500-21L873 640M853 614v5" />
        </g>
        <path d="M1082.500 762A42 40 0 0 0 1124.500 801.500V761" fill="none" stroke="#111" />

        <g fill="#111">
          {braces.map(([x, y]) => <text key={`${x}-${y}`} x={x} y={y}>K Brace</text>)}
          {bracesUp.map(([x, y]) => <text key={`${x}-${y}`} transform={`translate(${x} ${y}) rotate(-90)`}>K Brace</text>)}
          {rooms.map(([area, x, y, nameX, expX]) => (
            <g key={`${x}-${y}`}>
              <text x={nameX} y={y - 14} fontSize="8">房间</text>
              <text x={x} y={y}>{area}</text>
              <text x={expX} y={y - 5} fontSize="6">2</text>
            </g>
          ))}
        </g>

        <g fill={BLUE}>
          {sizes.map(([t, x, y]) => <text key={`${x}-${y}`} x={x} y={y}>{t}</text>)}
          {sizesUp.map(([t, x, y]) => <text key={`${x}-${y}`} transform={`translate(${x} ${y}) rotate(-90)`} fontSize="10">{t}</text>)}
        </g>

        {tags.map(([label, x, y, dir]) => <Tag key={label} label={label} x={x} y={y} dir={dir} />)}

        <g fill="#1c2f9c" fontSize="12" fontFamily="Noto Sans CJK SC, sans-serif">
          <rect x="926.500" y="892.500" width="62" height="31" fill="none" stroke="#1c2f9c" />
          <text x="930" y="903">楼层面积 1</text>
          <text x="940" y="920">82.2 m²</text>
        </g>
      </g>
    </svg>
  );
}

function StatusBar() {
  return (
    <footer className="flex h-[21px] shrink-0 border-t border-[#d0d0d0] bg-[#f0f0f0] leading-[19px] text-black">
      <span className="flex-[931] pl-[2px] text-[10px]">选择元素</span>
      <span className="flex-[765] border-l border-[#d5d5d5]" />
      <div className="flex w-[219px] font-['Open_Sans',sans-serif] text-[11px]">
        <span className="w-20 border-l border-[#d5d5d5] pl-[14px]">dx 8053</span>
        <span className="w-[70px] border-l border-[#d5d5d5] pl-1">dy 2453</span>
        <span className="flex-1 border-l border-[#d5d5d5] pl-1">z 0</span>
      </div>
    </footer>
  );
}

export default function App() {
  return (
    <div className="flex h-screen flex-col overflow-hidden bg-[#f0f0f0] font-['Noto_Sans_CJK_SC',sans-serif] text-[12px]">
      <TabBar />
      <Ribbon />
      <QuickAccess />
      <div className="flex min-h-0 flex-1">
        <Sidebar />
        <main className="relative min-w-0 flex-1 border-b border-l border-[#555] bg-white">
          <FloorPlan />
          <ViewCorner />
          <ViewToolbar />
          <WindowButtons />
        </main>
      </div>
      <StatusBar />
    </div>
  );
}
